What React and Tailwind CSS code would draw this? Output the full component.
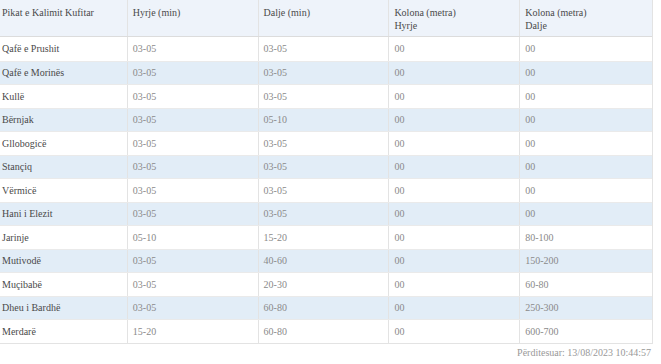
const rows = [
  ['Qafë e Prushit', '03-05', '03-05', '00', '00'],
  ['Qafë e Morinës', '03-05', '03-05', '00', '00'],
  ['Kullë', '03-05', '03-05', '00', '00'],
  ['Bërnjak', '03-05', '05-10', '00', '00'],
  ['Gllobogicë', '03-05', '03-05', '00', '00'],
  ['Stançiq', '03-05', '03-05', '00', '00'],
  ['Vërmicë', '03-05', '03-05', '00', '00'],
  ['Hani i Elezit', '03-05', '03-05', '00', '00'],
  ['Jarinje', '05-10', '15-20', '00', '80-100'],
  ['Mutivodë', '03-05', '40-60', '00', '150-200'],
  ['Muçibabë', '03-05', '20-30', '00', '60-80'],
  ['Dheu i Bardhë', '03-05', '60-80', '00', '250-300'],
  ['Merdarë', '15-20', '60-80', '00', '600-700'],
];

const widths = ['w-[127px]', 'w-[131px]', 'w-[131px]', 'w-[131px]', 'w-[133px]'];

export default function App() {
  return (
    <div className="w-[661px] h-[364px] bg-white font-[Liberation_Serif,serif] text-[10px]">
      <div className="w-[653px] border-r border-b border-[#e3e3e3]">
        <div className="flex h-[37px] bg-[#eef3fa] border-b border-[#dcdcdc] text-[#4a4a4a]">
          <div className={`${widths[0]} pl-[2px] pt-[6px] leading-[13px]`}>Pikat e Kalimit Kufitar</div>
          <div className={`${widths[1]} border-l border-[#e3e3e3] pl-[5px] pt-[6px] leading-[13px]`}>Hyrje (min)</div>
          <div className={`${widths[2]} border-l border-[#e3e3e3] pl-[5px] pt-[6px] leading-[13px]`}>Dalje (min)</div>
          <div className={`${widths[3]} border-l border-[#e3e3e3] pl-[5px] pt-[6px] leading-[13px]`}>
            Kolona (metra)
            <br />
            Hyrje
          </div>
          <div className={`${widths[4]} border-l border-[#e3e3e3] pl-[5px] pt-[6px] leading-[13px]`}>
            Kolona (metra)
            <br />
            Dalje
          </div>
        </div>
        {rows.map((r, i) => (
          <div
            key={r[0]}
            className={`flex h-[23.5px] items-stretch ${i % 2 === 1 ? 'bg-[#e2edf7]' : 'bg-white'} ${i > 0 ? 'border-t border-[#eaeaea]' : ''}`}
          >
            {r.map((c, j) => (
              <div
                key={j}
                className={`${widths[j]} flex items-center ${j === 0 ? 'pl-[2px] text-[#4a4a4a]' : 'pl-[5px] border-l border-[#e3e3e3] text-[#8a8a8a]'}`}
              >
                {c}
              </div>
            ))}
          </div>
        ))}
      </div>
      <div className="w-[651px] text-right text-[#999] pt-[1px]">Përditesuar: 13/08/2023 10:44:57</div>
    </div>
  );
}
